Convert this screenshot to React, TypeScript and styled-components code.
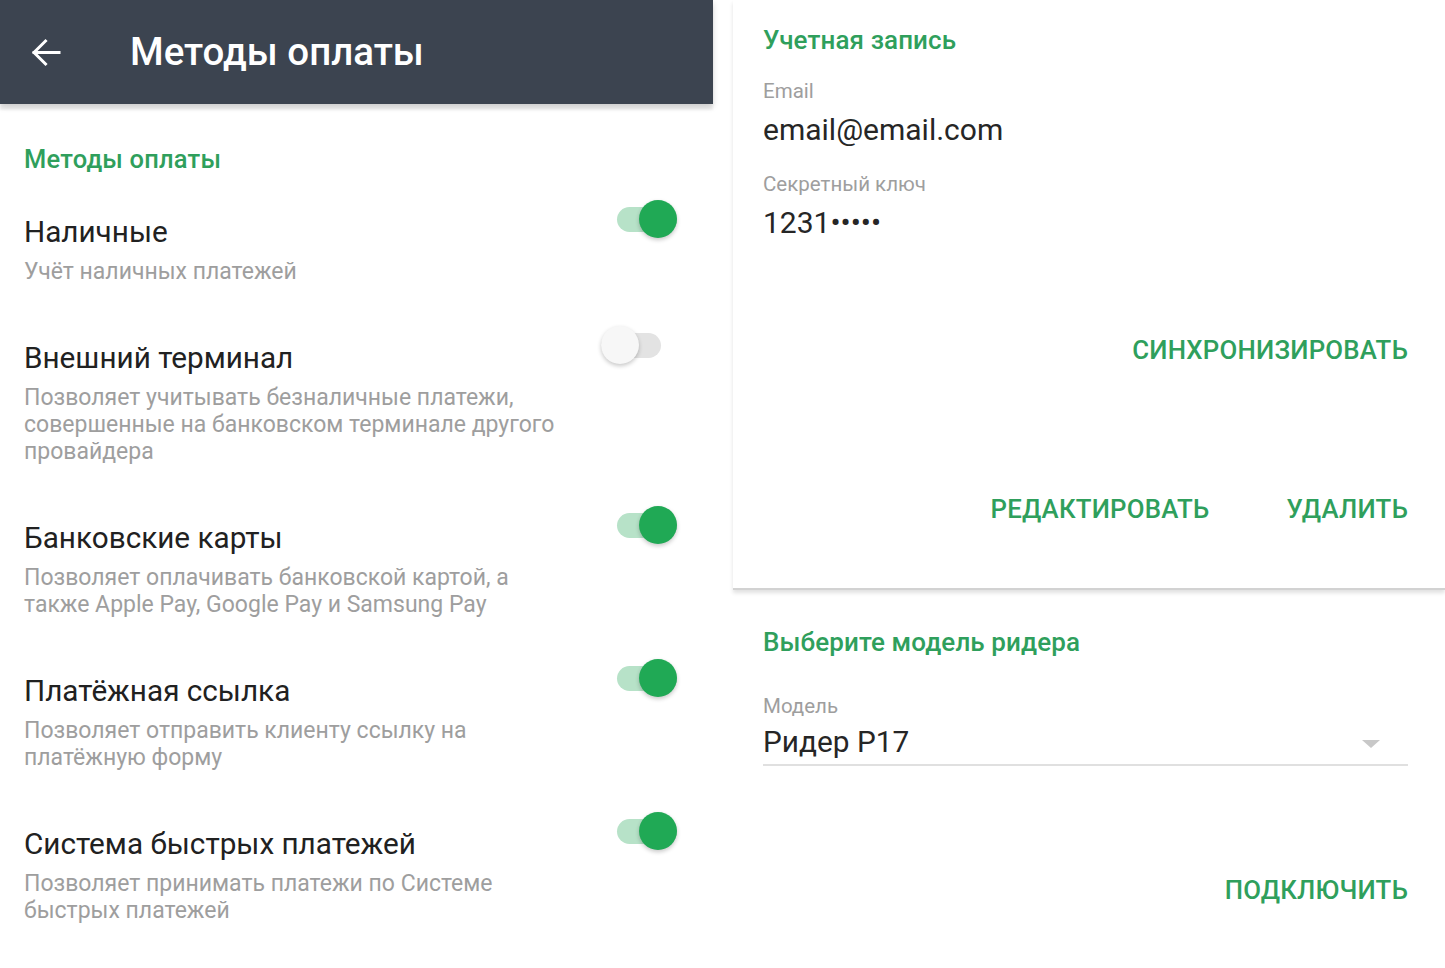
import React from "react";
import styled, { createGlobalStyle } from "styled-components";

const GlobalStyle = createGlobalStyle`
  html, body { margin: 0; padding: 0; background: #ffffff; }
  body { font-family: Roboto, "Noto Sans", "Liberation Sans", sans-serif; -webkit-font-smoothing: antialiased; }
  * { box-sizing: border-box; }
`;

const GREEN = "#2f9f5c";

const Page = styled.div`
  display: flex;
  width: 1445px;
  height: 968px;
  overflow: hidden;
  background: #fff;
`;

const LeftPane = styled.div`
  width: 713px;
  flex-shrink: 0;
  display: flex;
  flex-direction: column;
`;

const Header = styled.header`
  height: 104px;
  background: #3c4450;
  display: flex;
  align-items: center;
  padding-left: 30px;
  box-shadow: 0 3px 6px rgba(0, 0, 0, 0.16), 0 6px 2px rgba(0, 0, 0, 0.05);
  position: relative;
  z-index: 1;
`;

const BackIcon = styled.svg`
  width: 31px;
  height: 31px;
  flex-shrink: 0;
`;

const HeaderTitle = styled.h1`
  margin: 0 0 0 69px;
  font-size: 38.5px;
  font-weight: 500;
  color: #ffffff;
  line-height: 1;
`;

const LeftBody = styled.div`
  padding: 39px 0 0 24px;
  display: flex;
  flex-direction: column;
`;

const SectionTitle = styled.h2`
  margin: 0;
  font-size: 25.5px;
  line-height: 32px;
  letter-spacing: 0.2px;
  font-weight: 500;
  color: ${GREEN};
`;

const Rows = styled.div`
  margin-top: 11px;
  display: flex;
  flex-direction: column;
`;

const Row = styled.div`
  display: flex;
  align-items: flex-start;
  justify-content: space-between;
  padding: 27.5px 0 27.7px;
`;

const RowText = styled.div`
  display: flex;
  flex-direction: column;
`;

const RowTitle = styled.div`
  font-size: 29.7px;
  line-height: 36px;
  color: #212121;
`;

const RowSubtitle = styled.div`
  margin-top: 8px;
  font-size: 23px;
  line-height: 27px;
  color: #9e9e9e;
`;

const SwitchTrack = styled.div<{ $on: boolean }>`
  position: relative;
  width: 60px;
  height: 38px;
  margin-top: -14px;
  margin-right: ${(p) => (p.$on ? 36 : 52)}px;
  flex-shrink: 0;
  &::before {
    content: "";
    position: absolute;
    left: 0;
    right: 0;
    top: 7px;
    height: 25px;
    border-radius: 13px;
    background: ${(p) => (p.$on ? "#b7e2c8" : "#e3e3e3")};
  }
`;

const SwitchThumb = styled.div<{ $on: boolean }>`
  position: absolute;
  top: 0;
  ${(p) => (p.$on ? "right: 0;" : "left: 0;")}
  width: 38px;
  height: 38px;
  border-radius: 50%;
  background: ${(p) => (p.$on ? "#20a955" : "#f7f7f7")};
  box-shadow: 0 2px 4px rgba(0, 0, 0, 0.22);
`;

const RightPane = styled.div`
  flex: 1;
  margin-left: 20px;
  display: flex;
  flex-direction: column;
`;

const Card = styled.section<{ $divider?: boolean }>`
  display: flex;
  flex-direction: column;
  padding: 0 37px 0 30px;
  ${(p) =>
    p.$divider
      ? `border-bottom: 2px solid #d2d2d2; box-shadow: 0 3px 4px rgba(0,0,0,0.12);`
      : ""}
`;

const CardTitle = styled.h2<{ $top: number }>`
  margin: ${(p) => p.$top}px 0 0;
  font-size: 26px;
  line-height: 32px;
  letter-spacing: 0.1px;
  font-weight: 500;
  color: ${GREEN};
`;

const FieldLabel = styled.div<{ $top: number }>`
  margin-top: ${(p) => p.$top}px;
  font-size: 20.5px;
  line-height: 26px;
  color: #9e9e9e;
`;

const FieldValue = styled.div`
  margin-top: 8px;
  font-size: 30px;
  line-height: 36px;
  color: #262626;
`;

const Actions = styled.div<{ $top: number; $bottom?: number }>`
  display: flex;
  justify-content: flex-end;
  gap: 77px;
  margin-top: ${(p) => p.$top}px;
  margin-bottom: ${(p) => p.$bottom ?? 0}px;
`;

const TextButton = styled.button`
  border: 0;
  background: transparent;
  padding: 0;
  font-family: inherit;
  font-size: 25.8px;
  line-height: 32px;
  font-weight: 500;
  color: ${GREEN};
  letter-spacing: 0.2px;
  text-transform: uppercase;
  cursor: pointer;
`;

const SelectField = styled.div`
  margin-top: 5px;
  display: flex;
  align-items: center;
  justify-content: space-between;
  border-bottom: 2px solid #e0e0e0;
  padding-bottom: 4px;
`;

const SelectValue = styled.div`
  font-size: 29.8px;
  line-height: 36px;
  color: #262626;
`;

const Caret = styled.div`
  width: 0;
  height: 0;
  border-left: 9px solid transparent;
  border-right: 9px solid transparent;
  border-top: 8px solid #c8c8c8;
  margin-right: 28px;
  margin-top: 4px;
`;

const methods = [
  { title: "Наличные", sub: "Учёт наличных платежей", on: true, w: 560 },
  {
    title: "Внешний терминал",
    sub: "Позволяет учитывать безналичные платежи, совершенные на банковском терминале другого провайдера",
    on: false,
    w: 560,
  },
  {
    title: "Банковские карты",
    sub: "Позволяет оплачивать банковской картой, а также Apple Pay, Google Pay и Samsung Pay",
    on: true,
    w: 520,
  },
  {
    title: "Платёжная ссылка",
    sub: "Позволяет отправить клиенту ссылку на платёжную форму",
    on: true,
    w: 480,
  },
  {
    title: "Система быстрых платежей",
    sub: "Позволяет принимать платежи по Системе быстрых платежей",
    on: true,
    w: 500,
  },
];

export default function App() {
  return (
    <>
      <GlobalStyle />
      <Page>
        <LeftPane>
          <Header>
            <BackIcon viewBox="0 0 31 31" fill="none">
              <path
                d="M29 15.5H4M15.5 4L4 15.5L15.5 27"
                stroke="#ffffff"
                strokeWidth="3"
                strokeLinecap="square"
              />
            </BackIcon>
            <HeaderTitle>Методы оплаты</HeaderTitle>
          </Header>
          <LeftBody>
            <SectionTitle>Методы оплаты</SectionTitle>
            <Rows>
              {methods.map((m) => (
                <Row key={m.title}>
                  <RowText style={{ maxWidth: m.w }}>
                    <RowTitle>{m.title}</RowTitle>
                    <RowSubtitle>{m.sub}</RowSubtitle>
                  </RowText>
                  <SwitchTrack $on={m.on}>
                    <SwitchThumb $on={m.on} />
                  </SwitchTrack>
                </Row>
              ))}
            </Rows>
          </LeftBody>
        </LeftPane>
        <RightPane>
          <Card $divider>
            <CardTitle $top={24}>Учетная запись</CardTitle>
            <FieldLabel $top={22}>Email</FieldLabel>
            <FieldValue>email@email.com</FieldValue>
            <FieldLabel $top={23}>Секретный ключ</FieldLabel>
            <FieldValue>1231•••••</FieldValue>
            <Actions $top={93}>
              <TextButton>Синхронизировать</TextButton>
            </Actions>
            <Actions $top={127} $bottom={63}>
              <TextButton>Редактировать</TextButton>
              <TextButton>Удалить</TextButton>
            </Actions>
          </Card>
          <Card>
            <CardTitle $top={36}>Выберите модель ридера</CardTitle>
            <FieldLabel $top={35}>Модель</FieldLabel>
            <SelectField>
              <SelectValue>Ридер P17</SelectValue>
              <Caret />
            </SelectField>
            <Actions $top={108}>
              <TextButton>Подключить</TextButton>
            </Actions>
          </Card>
        </RightPane>
      </Page>
    </>
  );
}
